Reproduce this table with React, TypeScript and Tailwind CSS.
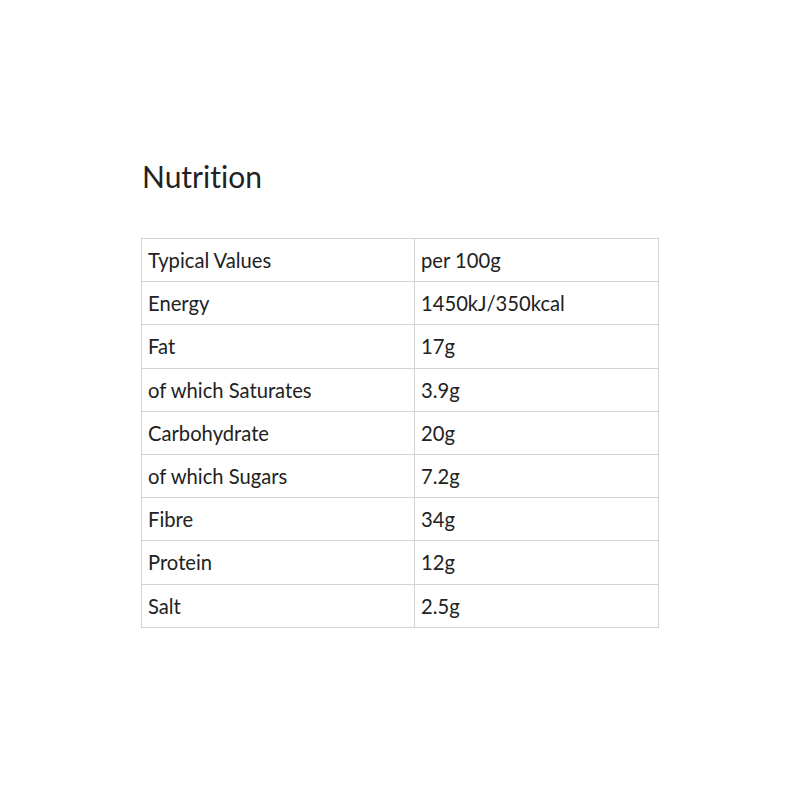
import React from "react";

const rows: [string, string][] = [
  ["Typical Values", "per 100g"],
  ["Energy", "1450kJ/350kcal"],
  ["Fat", "17g"],
  ["of which Saturates", "3.9g"],
  ["Carbohydrate", "20g"],
  ["of which Sugars", "7.2g"],
  ["Fibre", "34g"],
  ["Protein", "12g"],
  ["Salt", "2.5g"],
];

export default function App() {
  return (
    <div
      className="min-h-[800px] bg-white text-[#222222] [font-variant-ligatures:none]"
      style={{ fontFamily: "Lato, 'Noto Sans', sans-serif" }}
    >
      <div className="mx-auto w-[518px] pt-[158px]">
        <h1 className="text-[30px] leading-[36px] font-normal pl-px">Nutrition</h1>
        <table className="mt-[44px] w-[518px] border-collapse table-fixed">
          <colgroup>
            <col className="w-[273px]" />
            <col />
          </colgroup>
          <tbody>
            {rows.map(([k, v]) => (
              <tr key={k}>
                <td className="border border-[#d3d3d3] px-[6px] py-[9.1px] text-[20.2px] leading-[24px]">
                  {k}
                </td>
                <td className="border border-[#d3d3d3] px-[6px] py-[9.1px] text-[20.2px] leading-[24px]">
                  {v}
                </td>
              </tr>
            ))}
          </tbody>
        </table>
      </div>
    </div>
  );
}
